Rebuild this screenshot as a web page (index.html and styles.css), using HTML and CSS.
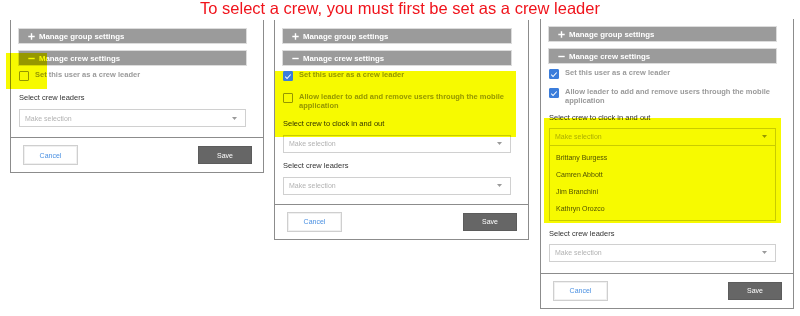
FILE: index.html
```html
<!DOCTYPE html>
<html>
<head>
	<title>Crew leader settings</title>
	<link rel="stylesheet" href="styles.css">
</head>
<body>
	<h1 class="title">To select a crew, you must first be set as a crew leader</h1>

	<div class="panels">

		<!-- Step 1: nothing checked -->
		<div class="panel panel-1">
			<div class="panel-body">
				<div class="bar"><svg class="ico" viewBox="0 0 7 7"><path d="M3.5 0.3v6.4M0.3 3.5h6.4"/></svg>Manage group settings</div>
				<div class="bar"><svg class="ico" viewBox="0 0 7 7"><path d="M0.3 3.5h6.4"/></svg>Manage crew settings</div>
				<div class="opts">
					<div class="opt"><span class="box"></span><span class="opt-text">Set this user as a crew leader</span></div>
				</div>
				<div class="field field-loose">
					<div class="field-label">Select crew leaders</div>
					<div class="select"><span>Make selection</span><svg class="caret" viewBox="0 0 5 3"><path d="M0 0h5L2.5 3z"/></svg></div>
				</div>
			</div>
			<div class="panel-foot">
				<button class="btn-cancel">Cancel</button>
				<button class="btn-save">Save</button>
			</div>
		</div>

		<!-- Step 2: leader checked -->
		<div class="panel panel-2">
			<div class="panel-body">
				<div class="bar"><svg class="ico" viewBox="0 0 7 7"><path d="M3.5 0.3v6.4M0.3 3.5h6.4"/></svg>Manage group settings</div>
				<div class="bar"><svg class="ico" viewBox="0 0 7 7"><path d="M0.3 3.5h6.4"/></svg>Manage crew settings</div>
				<div class="opts">
					<div class="opt"><span class="box box-on"><svg class="tick" viewBox="0 0 10 10"><path d="M1.6 5.3l2.2 2.2 4.6-5"/></svg></span><span class="opt-text">Set this user as a crew leader</span></div>
					<div class="opt"><span class="box"></span><span class="opt-text">Allow leader to add and remove users through the mobile application</span></div>
				</div>
				<div class="field">
					<div class="field-label">Select crew to clock in and out</div>
					<div class="select"><span>Make selection</span><svg class="caret" viewBox="0 0 5 3"><path d="M0 0h5L2.5 3z"/></svg></div>
				</div>
				<div class="field">
					<div class="field-label">Select crew leaders</div>
					<div class="select"><span>Make selection</span><svg class="caret" viewBox="0 0 5 3"><path d="M0 0h5L2.5 3z"/></svg></div>
				</div>
			</div>
			<div class="panel-foot">
				<button class="btn-cancel">Cancel</button>
				<button class="btn-save">Save</button>
			</div>
		</div>

		<!-- Step 3: crew list open -->
		<div class="panel panel-3">
			<div class="panel-body">
				<div class="bar"><svg class="ico" viewBox="0 0 7 7"><path d="M3.5 0.3v6.4M0.3 3.5h6.4"/></svg>Manage group settings</div>
				<div class="bar"><svg class="ico" viewBox="0 0 7 7"><path d="M0.3 3.5h6.4"/></svg>Manage crew settings</div>
				<div class="opts">
					<div class="opt"><span class="box box-on"><svg class="tick" viewBox="0 0 10 10"><path d="M1.6 5.3l2.2 2.2 4.6-5"/></svg></span><span class="opt-text">Set this user as a crew leader</span></div>
					<div class="opt"><span class="box box-on"><svg class="tick" viewBox="0 0 10 10"><path d="M1.6 5.3l2.2 2.2 4.6-5"/></svg></span><span class="opt-text">Allow leader to add and remove users through the mobile application</span></div>
				</div>
				<div class="field">
					<div class="field-label">Select crew to clock in and out</div>
					<div class="select"><span>Make selection</span><svg class="caret" viewBox="0 0 5 3"><path d="M0 0h5L2.5 3z"/></svg></div>
					<ul class="menu">
						<li>Brittany Burgess</li>
						<li>Camren Abbott</li>
						<li>Jim Branchini</li>
						<li>Kathryn Orozco</li>
					</ul>
				</div>
				<div class="field">
					<div class="field-label">Select crew leaders</div>
					<div class="select"><span>Make selection</span><svg class="caret" viewBox="0 0 5 3"><path d="M0 0h5L2.5 3z"/></svg></div>
				</div>
			</div>
			<div class="panel-foot">
				<button class="btn-cancel">Cancel</button>
				<button class="btn-save">Save</button>
			</div>
		</div>

	</div>

	<!-- highlighter marks drawn over the screenshots -->
	<div class="mark mark-1"></div>
	<div class="mark mark-2"></div>
	<div class="mark mark-3"></div>
</body>
</html>
```

FILE: styles.css
```css
/* Three cropped dialog screenshots with highlighter marks */

body {
	margin: 0;
	font-family: "Liberation Sans", Arial, sans-serif;
	background: #fff;
}

.title {
	margin: 0;
	font-size: 16.5px;
	font-weight: normal;
	line-height: 16px;
	text-align: center;
	color: #f0141c;
}

.panels {
	display: flex;
	align-items: flex-start;
	margin-top: 4px;
	padding-left: 10px;
}

.panel {
	width: 254px;
	box-sizing: border-box;
	border: 1px solid #8c8c8c;
	border-top: none;
	background: #fff;
}
.panel-2 { width: 255px; margin-left: 10px; }
.panel-3 { margin-left: 11px; margin-top: -1px; }

.panel-body { padding: 9px 17px 9px 8px; }
.panel-1 .panel-body { padding-bottom: 10px; }
.panel-3 .panel-body { padding-top: 8px; padding-bottom: 11px; }

/* accordion bars */
.bar {
	height: 14px;
	display: flex;
	align-items: center;
	gap: 4px;
	padding-left: 9px;
	background: #9b9b9b;
	box-shadow: 0 0 0 1px #dcdcdc;
	color: #fff;
	font-size: 7.8px;
	font-weight: bold;
}
.bar + .bar { margin-top: 8px; }

.ico { width: 7px; height: 7px; }
.ico path { stroke: #fff; stroke-width: 1.4; fill: none; }

/* checkboxes */
.opts { margin-top: 6px; }

.opt {
	display: flex;
	align-items: flex-start;
	gap: 6px;
	font-size: 7.5px;
	font-weight: bold;
	line-height: 9.5px;
	color: #9a9a9a;
}
.opt + .opt { margin-top: 12px; }
.panel-3 .opt + .opt { margin-top: 9px; }
.opt-text { margin-top: -1.5px; }

.box {
	flex: none;
	width: 10px;
	height: 10px;
	box-sizing: border-box;
	border: 1px solid #9a9a9a;
	border-radius: 1px;
	background: #fff;
}
/* the checked box stays blue above the highlighter */
.box-on {
	position: relative;
	z-index: 1;
	display: flex;
	align-items: center;
	justify-content: center;
	background: #3b7ddb;
	border-color: #3b7ddb;
}
.tick { width: 9px; height: 9px; }
.tick path { stroke: #fff; stroke-width: 1.3; fill: none; }

/* select fields */
.field { margin-top: 8px; }
.opts + .field { margin-top: 8px; }
.panel-3 .opts + .field { margin-top: 7px; }
.field-loose { margin-top: 12px !important; }

.field-label {
	margin-bottom: 6px;
	font-size: 7.5px;
	line-height: 10px;
	color: #333;
}
.panel-3 .field-label { margin-bottom: 5px; }

.select {
	height: 18px;
	box-sizing: border-box;
	display: flex;
	align-items: center;
	justify-content: space-between;
	padding: 0 8px 0 5px;
	border: 1px solid #d0d0d0;
	font-size: 7px;
	color: #b3b3b3;
}
.caret { width: 5px; height: 3px; }
.caret path { fill: #9a9a9a; }

.menu {
	margin: 0;
	padding: 3px 0;
	list-style: none;
	border: 1px solid #cfcfcf;
	border-top: none;
}
.menu li {
	height: 17px;
	line-height: 17px;
	padding-left: 6px;
	font-size: 7px;
	color: #555;
}

/* footer buttons */
.panel-foot {
	display: flex;
	align-items: center;
	justify-content: space-between;
	padding: 7px 11px 7px 12px;
	border-top: 1px solid #8c8c8c;
}

button {
	font-family: inherit;
	font-size: 7px;
	cursor: pointer;
}
.btn-cancel {
	width: 55px;
	height: 20px;
	background: #fff;
	border: 1px solid #cfcfcf;
	box-shadow: inset 0 0 0 1px #f0f0f0;
	color: #4a90e2;
}
.btn-save {
	width: 54px;
	height: 18px;
	background: #666;
	border: 1px solid #5c5c5c;
	color: #fff;
}

/* highlighter */
.mark {
	position: absolute;
	background: #f7fa00;
	mix-blend-mode: multiply;
}
.mark-1 { left: 6px; top: 53px; width: 41px; height: 36px; }
.mark-2 { left: 275px; top: 71px; width: 241px; height: 66px; }
.mark-3 { left: 544px; top: 118px; width: 237px; height: 105px; }
```
